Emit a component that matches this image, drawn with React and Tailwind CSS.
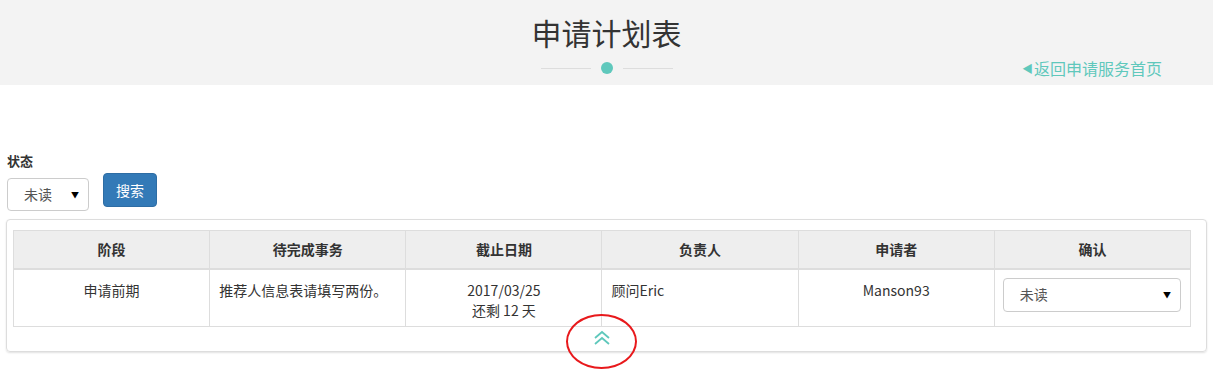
import React from 'react';

const font = { fontFamily: '"Noto Sans CJK SC", "Noto Sans", sans-serif' };

const columns = ['阶段', '待完成事务', '截止日期', '负责人', '申请者', '确认'];

const SelectBox = ({ className }) => (
  <div
    className={`flex items-center justify-between border border-[#ccc] rounded bg-white text-[14px] text-[#555] ${className}`}
  >
    <span>未读</span>
    <span className="text-[8px] text-black">▼</span>
  </div>
);

export default function App() {
  return (
    <div className="w-[1213px] h-[376px] bg-white text-[#333] overflow-hidden" style={font}>
      {/* Header */}
      <div className="h-[85px] bg-[#f3f3f3] relative">
        <h1 className="text-center text-[30px] leading-none pt-[17px] text-[#333]">申请计划表</h1>
        <div className="flex items-center justify-center mt-[15px] gap-[10px]">
          <div className="w-[50px] h-px bg-[#ddd]" />
          <div className="w-[12px] h-[12px] rounded-full bg-[#5fc8bc]" />
          <div className="w-[50px] h-px bg-[#ddd]" />
        </div>
        <a className="absolute left-[1022px] top-[56px] text-[16px] text-[#5fc8bc] flex items-center">
          <span className="text-[11px] mr-[1px]">◀</span>返回申请服务首页
        </a>
      </div>

      {/* Filter */}
      <div className="px-[7px] pt-[69px]">
        <div className="text-[13px] font-bold leading-none text-[#333]">状态</div>
        <div className="flex items-start gap-[14px] mt-[6px]">
          <SelectBox className="w-[82px] h-[33px] mt-[5px] pl-[16px] pr-[9px]" />
          <button className="w-[54px] h-[34px] bg-[#337ab7] text-white text-[14px] rounded border border-[#2e6da4]">搜索</button>
        </div>
      </div>

      {/* Panel */}
      <div className="relative ml-[6px] mt-[8px] w-[1201px] h-[133px] border border-[#ddd] rounded shadow-[0_1px_2px_rgba(0,0,0,0.12)] pt-[10px] pl-[6px]">
        <table className="w-[1178px] border-collapse text-[14px] table-fixed">
          <thead>
            <tr className="bg-[#eee] h-[38px]">
              {columns.map((c) => (
                <th key={c} className="border border-[#ddd] border-b-2 font-bold text-center text-[#333]">
                  {c}
                </th>
              ))}
            </tr>
          </thead>
          <tbody>
            <tr className="h-[58px] align-top">
              <td className="border border-[#ddd] text-center pt-[10px] leading-[20px]">申请前期</td>
              <td className="border border-[#ddd] pl-[9px] pt-[10px] leading-[20px]">推荐人信息表请填写两份。</td>
              <td className="border border-[#ddd] text-center pt-[10px] leading-[20px]">
                2017/03/25
                <br />
                还剩 12 天
              </td>
              <td className="border border-[#ddd] pl-[9px] pt-[10px] leading-[20px]">顾问Eric</td>
              <td className="border border-[#ddd] text-center pt-[10px] leading-[20px]">Manson93</td>
              <td className="border border-[#ddd] pl-[8px] pr-[9px] pt-[8px]">
                <SelectBox className="w-full h-[34px] pl-[16px] pr-[9px]" />
              </td>
            </tr>
          </tbody>
        </table>

        {/* Scroll-up chevron */}
        <div className="absolute left-[585px] top-[110px] text-[#5fc8bc]">
          <svg width="20" height="16" viewBox="0 0 20 16" fill="none" stroke="currentColor" strokeWidth="1.8">
            <path d="M3 8 L10 2 L17 8" />
            <path d="M3 14 L10 8 L17 14" />
          </svg>
        </div>
      </div>

      {/* Red annotation ellipse */}
      <div className="absolute left-[566px] top-[314px] w-[71px] h-[55px] rounded-[50%] border-2 border-[#e8191c]" />
    </div>
  );
}
